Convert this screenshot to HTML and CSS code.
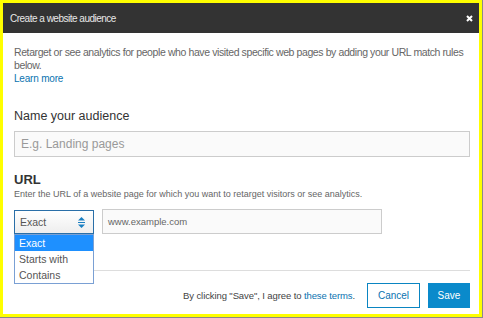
FILE: index.html
```html
<!DOCTYPE html>
<html lang="en">

<head>
	<meta charset="UTF-8">
	<meta name="viewport" content="width=device-width, initial-scale=1.0">
	<title>Create a website audience</title>
	<link rel="stylesheet" href="styles.css">
</head>

<body>

	<!-- Audience Dialog -->
	<div class="dialog">
		<div class="dialog-header">
			<span class="dialog-title">Create a website audience</span>
			<svg class="close-icon" width="7" height="7" viewBox="0 0 7 7">
				<path d="M1 1 L6 6 M6 1 L1 6" stroke="#fff" stroke-width="2"/>
			</svg>
		</div>

		<div class="dialog-body">
			<p class="intro">Retarget or see analytics for people who have visited specific web pages by adding your URL match rules below.</p>
			<a class="learn-link" href="#">Learn more</a>

			<label class="field-label">Name your audience</label>
			<div class="text-input name-input">E.g. Landing pages</div>

			<div class="url-label">URL</div>
			<p class="url-help">Enter the URL of a website page for which you want to retarget visitors or see analytics.</p>

			<div class="url-row">
				<div class="select-wrap">
					<div class="select-box">
						<span>Exact</span>
						<svg width="7" height="11" viewBox="0 0 7 11">
							<path d="M3.5 0 L7 3.5 L0 3.5 Z" fill="#1a7fc1"/>
							<path d="M0 5.5 L7 5.5" stroke="#1a7fc1" stroke-width="1"/>
							<path d="M0 7.5 L7 7.5 L3.5 11 Z" fill="#1a7fc1"/>
						</svg>
					</div>
					<ul class="select-list">
						<li class="selected">Exact</li>
						<li>Starts with</li>
						<li>Contains</li>
					</ul>
				</div>
				<div class="text-input url-input">www.example.com</div>
			</div>
		</div>

		<div class="dialog-footer">
			<span class="terms">By clicking "Save", I agree to <a href="#">these terms</a>.</span>
			<button class="btn cancel-btn">Cancel</button>
			<button class="btn save-btn">Save</button>
		</div>
	</div>

</body>

</html>
```
FILE: styles.css
```css
body
{
	margin: 0;
	background-color: #8a8a8a;
	font-family: "Liberation Sans", Arial, sans-serif;
}

.dialog
{
	width: 476px;
	height: 311px;
	border: 3px solid #ffff00;
	background-color: white;
	display: flex;
	flex-direction: column;
}

.dialog-header
{
	height: 30px;
	background-color: #333333;
	display: flex;
	align-items: center;
	justify-content: space-between;
	padding: 0 6px 0 7px;
}

.dialog-title
{
	color: #e8e8e8;
	font-size: 10px;
	letter-spacing: -0.5px;
}

.close-icon
{
	display: block;
}

.dialog-body
{
	padding: 0 9px 0 11px;
	position: relative;
}

.intro
{
	margin: 13px 0 0 0;
	font-size: 10.5px;
	letter-spacing: -0.4px;
	line-height: 13px;
	color: #666666;
}

.learn-link
{
	display: block;
	margin-top: 1px;
	font-size: 10px;
	letter-spacing: -0.2px;
	line-height: 12px;
	color: #0a73b0;
	text-decoration: none;
}

.field-label
{
	display: block;
	margin-top: 23px;
	font-size: 12.5px;
	line-height: 16px;
	color: #333333;
}

.text-input
{
	box-sizing: border-box;
	border: 1px solid #cccccc;
	background-color: #fafafa;
	color: #999999;
	display: flex;
	align-items: center;
}

.name-input
{
	margin-top: 7px;
	height: 26px;
	padding-left: 6px;
	font-size: 12px;
}

.url-label
{
	margin-top: 15px;
	font-size: 13px;
	font-weight: bold;
	line-height: 16px;
	color: #333333;
}

.url-help
{
	margin: 0;
	font-size: 9px;
	line-height: 12px;
	color: #666666;
}

.url-row
{
	display: flex;
	gap: 8px;
	margin-top: 10px;
}

.select-wrap
{
	position: relative;
	width: 80px;
}

.select-box
{
	box-sizing: border-box;
	height: 24px;
	border: 1px solid #2a6fa8;
	background: linear-gradient(#ffffff, #eeeeee);
	display: flex;
	align-items: center;
	justify-content: space-between;
	padding: 0 8px 0 5px;
	font-size: 10.5px;
	color: #555555;
}

.select-box svg
{
	display: block;
}

.select-list
{
	position: absolute;
	top: 24px;
	left: 0;
	width: 80px;
	box-sizing: border-box;
	margin: 0;
	padding: 0;
	list-style: none;
	border: 1px solid #7aa0d4;
	background-color: white;
	font-size: 10.5px;
	color: #555555;
	z-index: 10;
}

.select-list li
{
	height: 16px;
	line-height: 16px;
	padding-left: 4px;
}

.select-list .selected
{
	background-color: #1e90ff;
	color: white;
}

.url-input
{
	width: 280px;
	height: 25px;
	margin-top: -1px;
	padding-left: 5px;
	font-size: 9.5px;
	color: #666666;
}

.dialog-footer
{
	margin: 36px 9px 0 11px;
	border-top: 1px solid #dddddd;
	padding-top: 12px;
	display: flex;
	align-items: center;
	justify-content: flex-end;
}

.terms
{
	font-size: 9.5px;
	letter-spacing: -0.1px;
	color: #444444;
	margin-right: 12px;
}

.terms a
{
	color: #0a73b0;
	text-decoration: none;
}

.btn
{
	height: 25px;
	font-family: "Liberation Sans", Arial, sans-serif;
	font-size: 10px;
	cursor: pointer;
	padding: 0;
}

.cancel-btn
{
	width: 53px;
	border: 1px solid #0a85c2;
	background-color: white;
	color: #0a73b0;
	margin-right: 8px;
}

.save-btn
{
	width: 42px;
	border: none;
	background-color: #0a8acb;
	color: white;
}
```
